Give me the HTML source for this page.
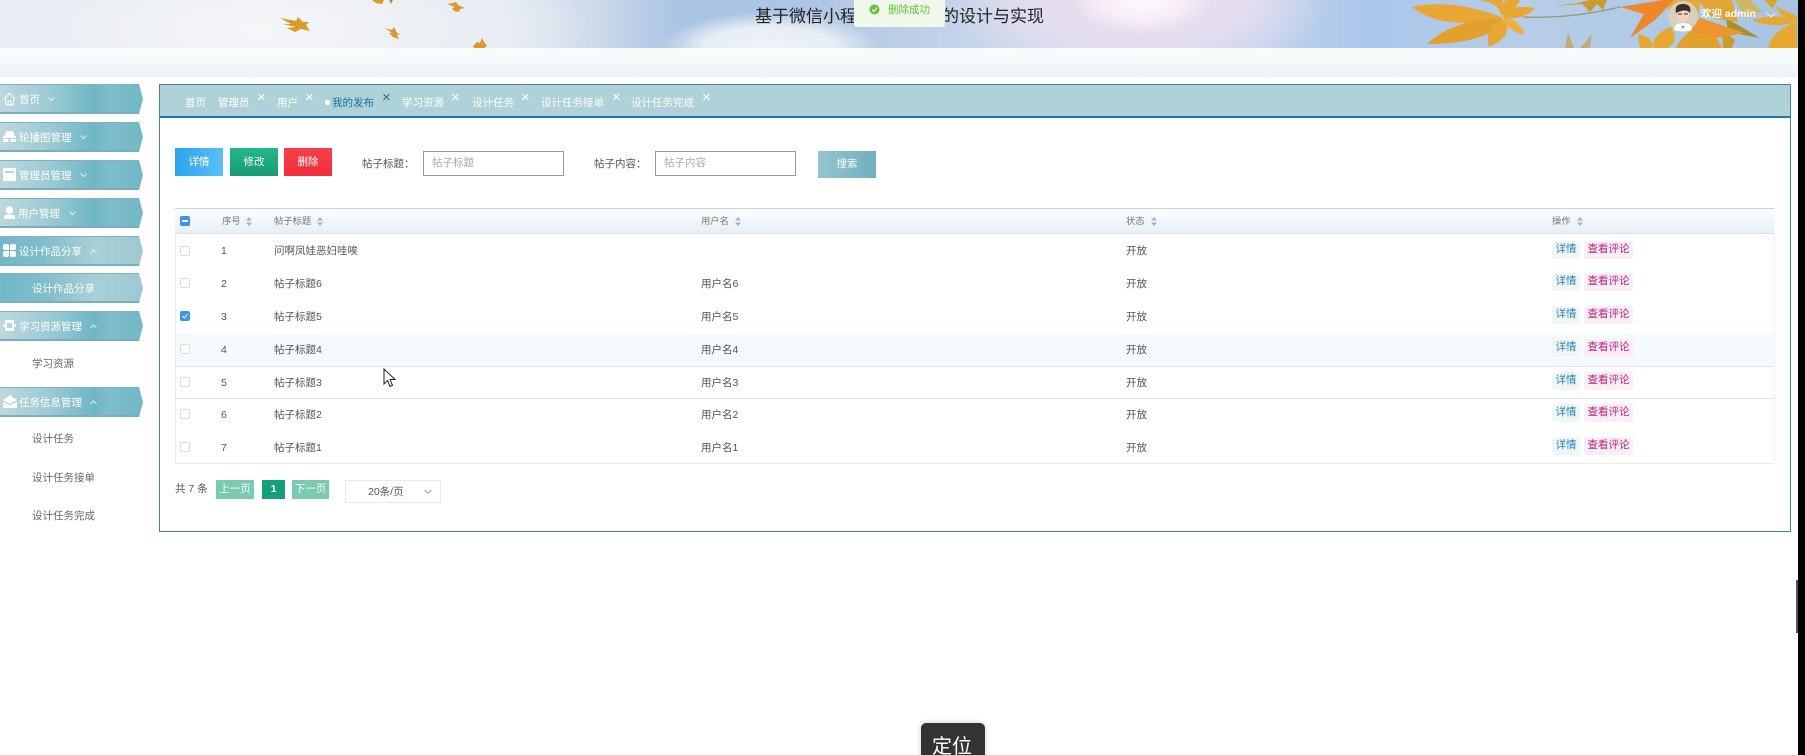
<!DOCTYPE html>
<html lang="zh"><head><meta charset="utf-8"><title>我的发布</title>
<style>
html,body{margin:0;padding:0;background:#fff;width:1805px;height:755px;overflow:hidden}
#w{position:relative;width:1805px;height:755px;overflow:hidden;font-family:"Liberation Sans","Noto Sans CJK SC",sans-serif;font-size:10.5px;color:#555;filter:blur(.3px)}
.a,.t{position:absolute}
.t{line-height:16px;height:16px;white-space:nowrap}
.hd{left:0;top:0;width:1798px;height:48px;background:
radial-gradient(ellipse 70px 34px at 1142px 0,#fffaff 0,#f7eef7 55%,rgba(245,235,245,0) 100%),
radial-gradient(ellipse 190px 80px at 1140px 0,#e9e0f0 0,#e4ddef 55%,rgba(225,220,240,0) 100%),
radial-gradient(ellipse 110px 36px at 770px 48px,#f0f3f7 0,#e6edf5 60%,rgba(225,235,245,0) 100%),
radial-gradient(ellipse 330px 100px at 260px 30px,#f5f6f8 0,#e9edf3 70%,rgba(225,232,242,0) 100%),
linear-gradient(90deg,#e5ebf3 0,#e2e9f2 28%,#cdd9ea 33%,#a9c3e3 38%,#aec6e4 45%,#c9d6ea 55%,#d9dff0 62%,#c4d3ec 70%,#a9c6ea 76%,#b7cde8 85%,#a8c4e2 100%)}
.band{left:0;top:48px;width:1798px;height:29px;background:linear-gradient(180deg,#fafdfe,#ecf3f6)}
.strip{left:1798px;top:0;width:7px;height:755px;background:#000}
.it{left:0;width:143px;height:30px;clip-path:polygon(0 0,139px 0,143px 50%,139px 100%,0 100%);background:linear-gradient(90deg,#bcd8de 0,#9ccad4 35%,#6fb6c5 66%,#80bdca 76%,#71b8c7 100%);box-shadow:inset 0 1px 0 #7fb1bf,inset 0 -2px 0 #79aebc;color:#fff}
.it.on{background:linear-gradient(90deg,#72b8c8 0,#7fbdca 30%,#a9ced6 65%,#a4ccd5 85%,#9cc8d1 100%)}
.it span{position:absolute;top:8px;line-height:16px;white-space:nowrap}
.it svg{position:absolute;left:3px;top:8px}
.it svg.ch{position:absolute;top:13px;opacity:.75}
.sub{left:32px;color:#666}
.box{left:159px;top:84px;width:1630px;height:446px;border:1px solid #4a7f96;background:#fff}
.tabs{left:160px;top:85px;width:1630px;height:31px;background:#afd2d8;border-bottom:2px solid #1f76ac}
.tb{color:#fff}.x{color:#fff;font-size:15px;font-weight:normal}
.btn{color:#fff;text-align:center;box-sizing:border-box;line-height:29px;height:28px;top:148px;width:48px}
.ip{top:151px;height:25px;width:141px;box-sizing:border-box;border:1px solid #999;background:#fff;color:#aaa;line-height:23px;padding-left:8px}
.th{left:175px;top:208px;width:1599px;height:26px;box-sizing:border-box;background:linear-gradient(180deg,#fbfdfe,#e5f0f6);border-top:1px solid #c5d3dc;border-bottom:1px solid #d5e2ea}
.h{color:#777;font-size:9.300px}
.so{position:absolute;width:6px;height:9px}
.cb{left:180px;width:10px;height:10px;box-sizing:border-box;border:1px solid #ddd;border-radius:2px;background:#fff}
.c1,.c2,.c3,.c4,.d,.e{margin-top:1px}
.c1{left:221px}.c2{left:274px}.c3{left:701px}.c4{left:1126px}
.d{left:1552px;width:28px;height:18px;line-height:17px;text-align:center;background:#eff7fb;color:#2a84b0;border-radius:2px}
.e{left:1584px;width:49px;height:18px;line-height:17px;text-align:center;background:#fdedf5;color:#b5257a;border-radius:2px}
.pg{top:480px;height:19px;line-height:18px;text-align:center;color:#fff;background:#7ac9b1}
</style></head><body><div id="w">

<div class="a hd"></div>
<svg class="a" style="left:0;top:0" width="1798" height="48" viewBox="0 0 1798 48">
<g fill="#d99a2a">
<path d="M280 18L296 21 298 17 303 22 309 22 306 25 310 31 301 29 295 32 287 28 296 27 283 24 291 24Z"/>
<path d="M372 0H384L382 4 376 3Z"/><path d="M389 0H393L391 4Z" fill="#9a9a40"/>
<path d="M385 28L392 30 394 27 397 33 400 34 397 35 399 39 393 37 389 33 392 33Z"/>
<path d="M447 4L453 3 456 2 458 5 465 8 460 9 459 12 454 11 452 8 455 7Z"/>
<path d="M473 46L477 42 480 43 482 38 484 42 487 46 484 48H474Z"/>
</g>
<path d="M1523 17Q1570 19 1620 7" stroke="#8f9a70" stroke-width="1.2" fill="none"/>
<g fill="#e8a733">
<path d="M1502 17Q1450 -2 1412 7Q1440 30 1502 20Z"/>
<path d="M1502 19Q1455 18 1427 44Q1485 44 1503 22Z" fill="#e3a02e"/>
<path d="M1501 20Q1484 30 1489 47Q1514 36 1505 20Z"/>
<path d="M1503 20Q1510 32 1525 35Q1520 20 1505 17Z" fill="#eeb040"/>
<path d="M1503 18Q1525 20 1535 8Q1512 4 1503 14Z"/>
<path d="M1502 15Q1516 10 1520 0H1506Q1500 5 1501 15Z"/>
<path d="M1501 15Q1500 4 1480 0H1503Z"/>
<path d="M1553 6L1578 3 1590 0H1607L1603 10 1597 4 1590 12 1582 4Z" fill="#c99c30"/>
</g>
<g fill="#c9a056" opacity=".75"><path d="M1565 48L1568 32 1574 48Z"/><path d="M1580 48L1592 34 1590 48Z"/></g>
<g fill="#e6a830">
<path d="M1638 34Q1655 38 1652 48H1640Z"/>
<path d="M1653 48Q1652 34 1671 27 1680 40 1668 48Z"/>
<path d="M1676 48Q1684 32 1700 26L1718 40 1722 48Z" fill="#e0a22a"/>
<path d="M1723 48L1722 30 1735 40 1732 48Z" fill="#c99c24"/>
<path d="M1768 48Q1772 30 1797 22V48Z"/>
<path d="M1752 20Q1775 12 1797 21 1775 30 1752 20Z"/>
<path d="M1775 6L1797 16V22Q1782 20 1775 6Z" fill="#e3aa36"/>
<path d="M1726 18L1760 38 1728 32Z" fill="#a39230"/>
<path d="M1668 0H1700L1698 18 1680 28 1670 20Z" fill="#e4ab34"/>
<path d="M1735 0H1750L1762 12 1745 18Z" fill="#d6b34a" opacity=".8"/>
<path d="M1698 0H1732L1738 22 1712 18Z" fill="#e1a534"/>
<path d="M1764 0H1778L1772 8Z" fill="#d9a52c"/>
</g>
<path d="M1620 7L1663 0H1674L1655 20 1630 38 1644 14Z" fill="#f0862c"/>
<path d="M1700 18L1745 33 1715 38 1688 30Z" fill="#ee942e"/>
<circle cx="1683" cy="16" r="15" fill="#d6d1bf"/>
<path d="M1674 30Q1674 23 1683 23 1692 23 1692 30 1683 33 1674 30Z" fill="#fff"/>
<ellipse cx="1683" cy="14" rx="6.500" ry="8" fill="#f4d2bb"/>
<path d="M1676 13Q1674 4 1683 4 1692 4 1690 13 1686 8 1676 13Z" fill="#3b2f30"/>
<path d="M1678 14h4m2 0h4" stroke="#333" stroke-width="1"/>
<path d="M1681 26l2 3 2-3z" fill="#58a7c4"/>
</svg>
<div class="t" style="left:755px;top:8px;height:18px;line-height:18px;font-size:17px;color:#222">基于微信小程序设计分享的设计与实现</div>
<div class="t" style="left:1701px;top:6px;color:#fff;font-weight:bold">欢迎 admin</div>
<svg class="a" style="left:1766px;top:12px" width="10" height="6"><path d="M1 1l4 4 4-4" stroke="#fff" fill="none" opacity=".8"/></svg>
<div class="a" style="left:854px;top:0;width:91px;height:27px;background:#f0f9eb;border-radius:0 0 3px 3px"></div>
<svg class="a" style="left:869px;top:4px" width="11" height="11" viewBox="0 0 11 11"><circle cx="5.500" cy="5.500" r="5" fill="#67c23a"/><path d="M3 5.500l2 2 3-4" stroke="#fff" stroke-width="1.200" fill="none"/></svg>
<div class="t" style="left:888px;top:2px;color:#67c23a">删除成功</div>
<div class="a band"></div>

<!-- sidebar -->
<div class="a it" style="top:84px"><svg width="13" height="14" viewBox="0 0 13 14"><path d="M1 7L6.500 1.500 12 7M2.500 6V13H10.500V6M5 13V9H8V13" stroke="#fff" fill="none"/></svg><span style="left:19px">首页</span><svg class="ch" style="left:48px" width="7" height="5"><path d="M.5.5l3 3 3-3" stroke="#fff" fill="none"/></svg></div>
<div class="a it" style="top:122px"><svg width="13" height="13" viewBox="0 0 13 13"><path d="M3 1H10L11.500 6H13V8H0V6H1.500ZM0 9H5.500V12H0ZM7.500 9H13V12H7.500Z" fill="#fff"/></svg><span style="left:19px">轮播图管理</span><svg class="ch" style="left:80px" width="7" height="5"><path d="M.5.5l3 3 3-3" stroke="#fff" fill="none"/></svg></div>
<div class="a it" style="top:160px"><svg width="13" height="13" viewBox="0 0 13 13"><path d="M0 0H13V13H0ZM2 3V5H11V3Z" fill="#fff"/></svg><span style="left:19px">管理员管理</span><svg class="ch" style="left:80px" width="7" height="5"><path d="M.5.5l3 3 3-3" stroke="#fff" fill="none"/></svg></div>
<div class="a it" style="top:198px"><svg width="13" height="13" viewBox="0 0 13 13"><circle cx="6.500" cy="4" r="3.800" fill="#fff"/><path d="M1 13V11Q1 8.500 6.500 8.500 12 8.500 12 11V13Z" fill="#fff"/></svg><span style="left:18px">用户管理</span><svg class="ch" style="left:69px" width="7" height="5"><path d="M.5.5l3 3 3-3" stroke="#fff" fill="none"/></svg></div>
<div class="a it on" style="top:236px"><svg width="13" height="13" viewBox="0 0 13 13"><path d="M0 2Q0 0 2 0H4Q6 0 6 2V6H2Q0 6 0 4ZM7 2Q7 0 9 0H11Q13 0 13 2V4Q13 6 11 6H7ZM0 9Q0 7 2 7H6V11Q6 13 4 13H2Q0 13 0 11ZM7 7H11Q13 7 13 9V11Q13 13 11 13H9Q7 13 7 11Z" fill="#fff"/></svg><span style="left:19px">设计作品分享</span><svg class="ch" style="left:90px" width="7" height="5"><path d="M.5 4l3-3 3 3" stroke="#fff" fill="none"/></svg></div>
<div class="a it on" style="top:273px"><span style="left:32px">设计作品分享</span></div>
<div class="a it" style="top:311px"><svg width="13" height="13" viewBox="0 0 13 13"><path d="M2 1H11V12H2ZM4 4V9H9V4ZM0 5H1.500V8H0ZM11.500 5H13V8H11.500Z" fill="#fff" fill-rule="evenodd"/></svg><span style="left:19px">学习资源管理</span><svg class="ch" style="left:90px" width="7" height="5"><path d="M.5 4l3-3 3 3" stroke="#fff" fill="none"/></svg></div>
<div class="t sub" style="top:356px">学习资源</div>
<div class="a it" style="top:387px"><svg width="14" height="13" viewBox="0 0 14 13"><path d="M0 5L7 0 14 5 7 9ZM0 6.500L7 10.500 14 6.500V13H0Z" fill="#fff"/></svg><span style="left:19px">任务信息管理</span><svg class="ch" style="left:90px" width="7" height="5"><path d="M.5 4l3-3 3 3" stroke="#fff" fill="none"/></svg></div>
<div class="t sub" style="top:431px">设计任务</div>
<div class="t sub" style="top:470px">设计任务接单</div>
<div class="t sub" style="top:508px">设计任务完成</div>

<!-- box -->
<div class="a box"></div>
<div class="a tabs"></div>
<div class="t tb" style="left:185px;top:95px">首页</div>
<div class="t tb" style="left:218px;top:95px">管理员</div><div class="t x" style="left:257px;top:90px">×</div>
<div class="t tb" style="left:277px;top:95px">用户</div><div class="t x" style="left:305px;top:90px">×</div>
<div class="a" style="left:325px;top:100px;width:5px;height:5px;border-radius:50%;background:#fff"></div>
<div class="t" style="left:332px;top:95px;color:#1f6f9f">我的发布</div><div class="t x" style="left:382px;top:90px;color:#1f6f9f">×</div>
<div class="t tb" style="left:402px;top:95px">学习资源</div><div class="t x" style="left:451px;top:90px">×</div>
<div class="t tb" style="left:472px;top:95px">设计任务</div><div class="t x" style="left:521px;top:90px">×</div>
<div class="t tb" style="left:541px;top:95px">设计任务接单</div><div class="t x" style="left:612px;top:90px">×</div>
<div class="t tb" style="left:631px;top:95px">设计任务完成</div><div class="t x" style="left:702px;top:90px">×</div>

<!-- toolbar -->
<div class="a btn" style="left:175px;background:linear-gradient(90deg,#2ba5ee,#5abff5)">详情</div>
<div class="a btn" style="left:230px;background:linear-gradient(180deg,#25b68c,#179a72)">修改</div>
<div class="a btn" style="left:284px;background:linear-gradient(180deg,#f5404a,#ee2f3a)">删除</div>
<div class="t" style="left:362px;top:156px;color:#555">帖子标题：</div>
<div class="a ip" style="left:423px">帖子标题</div>
<div class="t" style="left:594px;top:156px;color:#555">帖子内容：</div>
<div class="a ip" style="left:655px">帖子内容</div>
<div class="a" style="left:818px;top:151px;width:58px;height:27px;line-height:26px;text-align:center;color:#fff;background:linear-gradient(90deg,#96c4ce,#6fb0bf)">搜索</div>

<!-- table -->
<div class="a th"></div>
<div class="a" style="left:175px;top:234px;width:1px;height:229px;background:#e3e8ec"></div>
<div class="a" style="left:1774px;top:234px;width:1px;height:229px;background:#edf1f3"></div>
<div class="a" style="left:176px;top:333px;width:1598px;height:33px;background:#f5fafc"></div>
<div class="a" style="left:175px;top:366px;width:1599px;height:1px;background:#dfe5ea"></div>
<div class="a" style="left:175px;top:398px;width:1599px;height:1px;background:#dfe5ea"></div>
<div class="a" style="left:175px;top:463px;width:1599px;height:1px;background:#e8ecef"></div>
<div class="a" style="left:180px;top:216px;width:10px;height:10px;background:#3f93ee;border-radius:2px"><div class="a" style="left:2px;top:4px;width:6px;height:2px;background:#fff"></div></div>
<div class="t h" style="left:222px;top:213px">序号</div><svg class="so" style="left:246px;top:217px"><path d="M0 3.500L3 0 6 3.500ZM0 5.500L3 9 6 5.500Z" fill="#a9b2b8"/></svg>
<div class="t h" style="left:274px;top:213px">帖子标题</div><svg class="so" style="left:317px;top:217px"><path d="M0 3.500L3 0 6 3.500ZM0 5.500L3 9 6 5.500Z" fill="#a9b2b8"/></svg>
<div class="t h" style="left:701px;top:213px">用户名</div><svg class="so" style="left:735px;top:217px"><path d="M0 3.500L3 0 6 3.500ZM0 5.500L3 9 6 5.500Z" fill="#a9b2b8"/></svg>
<div class="t h" style="left:1126px;top:213px">状态</div><svg class="so" style="left:1151px;top:217px"><path d="M0 3.500L3 0 6 3.500ZM0 5.500L3 9 6 5.500Z" fill="#a9b2b8"/></svg>
<div class="t h" style="left:1552px;top:213px">操作</div><svg class="so" style="left:1577px;top:217px"><path d="M0 3.500L3 0 6 3.500ZM0 5.500L3 9 6 5.500Z" fill="#a9b2b8"/></svg>

<div class="a cb" style="top:246px"></div><div class="t c1" style="top:242px">1</div><div class="t c2" style="top:242px">问啊凤娃恶妇哇唉</div><div class="t c4" style="top:242px">开放</div><div class="a d" style="top:240px">详情</div><div class="a e" style="top:240px">查看评论</div>
<div class="a cb" style="top:278px"></div><div class="t c1" style="top:275px">2</div><div class="t c2" style="top:275px">帖子标题6</div><div class="t c3" style="top:275px">用户名6</div><div class="t c4" style="top:275px">开放</div><div class="a d" style="top:272px">详情</div><div class="a e" style="top:272px">查看评论</div>
<div class="a" style="left:180px;top:311px;width:10px;height:10px;background:#3f93ee;border-radius:2px"><svg class="a" style="left:0;top:0" width="10" height="10"><path d="M2.500 5l2 2 3-4" stroke="#fff" fill="none"/></svg></div><div class="t c1" style="top:308px">3</div><div class="t c2" style="top:308px">帖子标题5</div><div class="t c3" style="top:308px">用户名5</div><div class="t c4" style="top:308px">开放</div><div class="a d" style="top:305px">详情</div><div class="a e" style="top:305px">查看评论</div>
<div class="a cb" style="top:344px"></div><div class="t c1" style="top:341px">4</div><div class="t c2" style="top:341px">帖子标题4</div><div class="t c3" style="top:341px">用户名4</div><div class="t c4" style="top:341px">开放</div><div class="a d" style="top:338px">详情</div><div class="a e" style="top:338px">查看评论</div>
<div class="a cb" style="top:377px"></div><div class="t c1" style="top:374px">5</div><div class="t c2" style="top:374px">帖子标题3</div><div class="t c3" style="top:374px">用户名3</div><div class="t c4" style="top:374px">开放</div><div class="a d" style="top:371px">详情</div><div class="a e" style="top:371px">查看评论</div>
<div class="a cb" style="top:409px"></div><div class="t c1" style="top:406px">6</div><div class="t c2" style="top:406px">帖子标题2</div><div class="t c3" style="top:406px">用户名2</div><div class="t c4" style="top:406px">开放</div><div class="a d" style="top:403px">详情</div><div class="a e" style="top:403px">查看评论</div>
<div class="a cb" style="top:442px"></div><div class="t c1" style="top:439px">7</div><div class="t c2" style="top:439px">帖子标题1</div><div class="t c3" style="top:439px">用户名1</div><div class="t c4" style="top:439px">开放</div><div class="a d" style="top:436px">详情</div><div class="a e" style="top:436px">查看评论</div>

<!-- cursor -->
<svg class="a" style="left:383px;top:368px" width="13" height="20" viewBox="0 0 13 20"><path d="M1 1V16L4.500 12.500 7 18.500 9.500 17.500 7 11.500H12Z" fill="#fff" stroke="#222"/></svg>

<!-- pagination -->
<div class="t" style="left:175px;top:481px">共 7 条</div>
<div class="a pg" style="left:216px;width:38px">上一页</div>
<div class="a pg" style="left:262px;width:23px;background:#14a07a;font-weight:bold;line-height:19px">1</div>
<div class="a pg" style="left:292px;width:37px">下一页</div>
<div class="a" style="left:345px;top:480px;width:96px;height:23px;box-sizing:border-box;border:1px solid #eaeaea"></div>
<div class="t" style="left:368px;top:484px">20条/页</div>
<svg class="a" style="left:424px;top:489px" width="8" height="6"><path d="M.5 1l3.500 3.500L7.500 1" stroke="#aaa" fill="none"/></svg>

<!-- float -->
<div class="a" style="left:921px;top:723px;width:64px;height:40px;background:#333;border-radius:5px;box-shadow:0 0 6px rgba(0,0,0,.2)"></div>
<div class="t" style="left:932px;top:734px;height:26px;line-height:26px;font-size:20px;color:#fff">定位</div>
<div class="a" style="left:1796px;top:580px;width:2px;height:53px;background:#555"></div>
<div class="a strip"></div>
</div></body></html>
